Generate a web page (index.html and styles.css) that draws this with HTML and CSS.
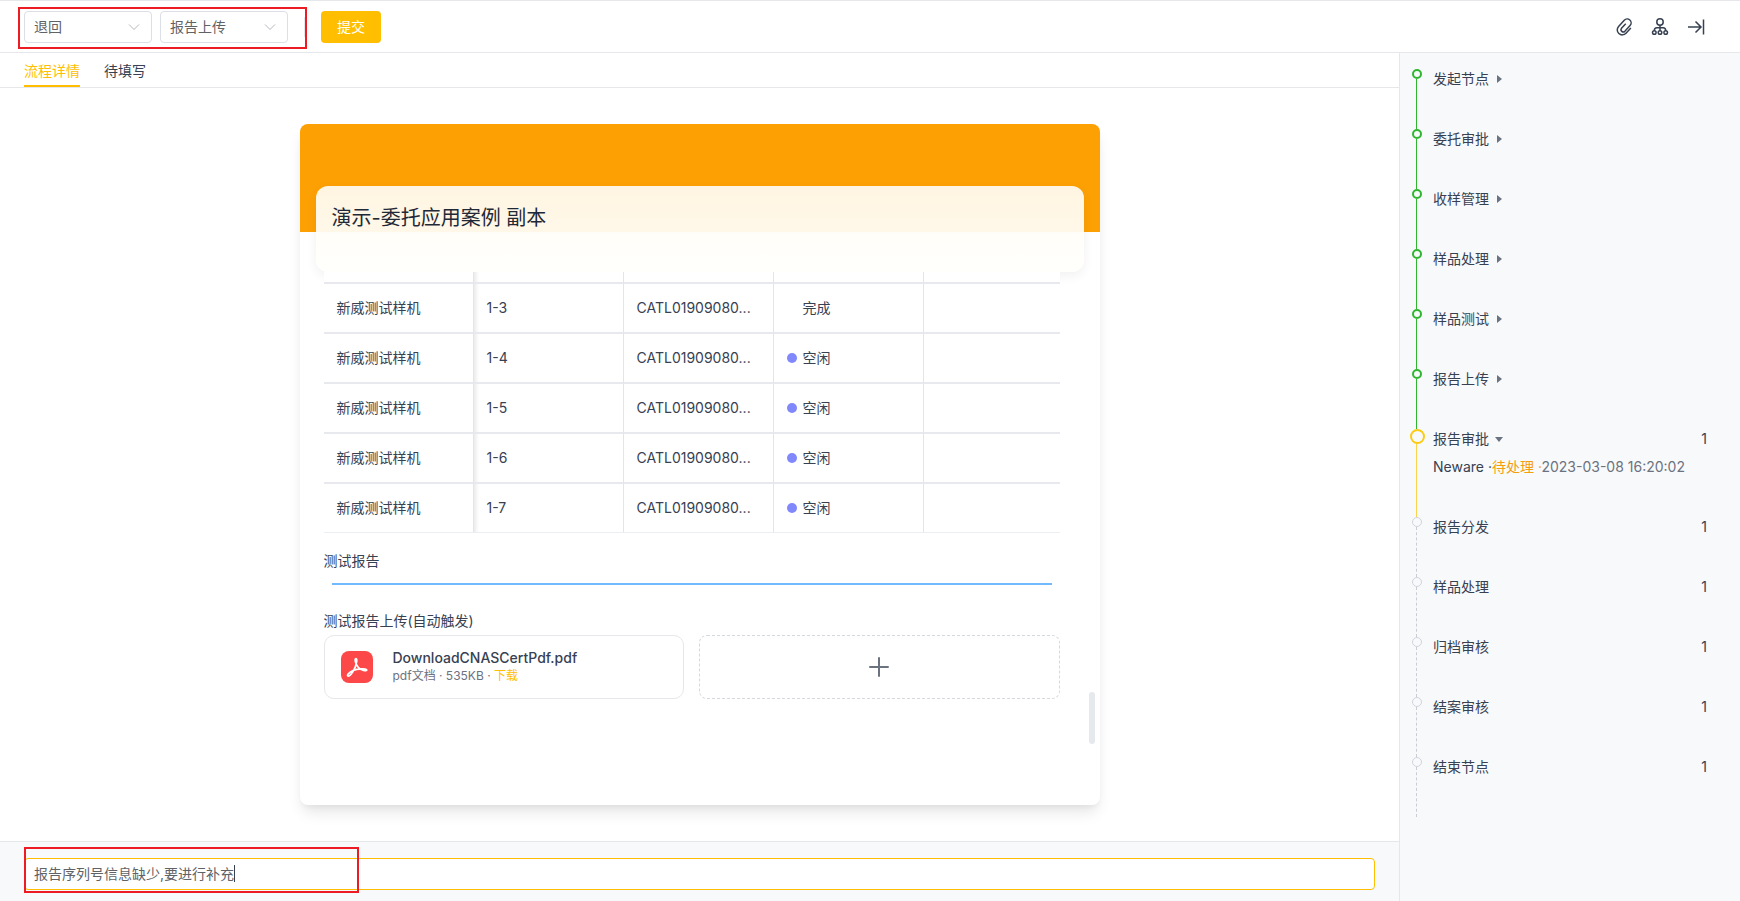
FILE: index.html
```html
<!DOCTYPE html>
<html lang="zh-CN">
<head>
<meta charset="utf-8">
<title>演示-委托应用案例 副本</title>
<link rel="stylesheet" href="styles.css">
</head>
<body>
<header class="topbar">
  <div class="field"><select class="select" aria-label="操作"><option>退回</option></select><svg class="chevron" viewBox="0 0 12 12" aria-hidden="true"><path d="M1 3.5l5 5 5-5"/></svg></div>
  <div class="field"><select class="select" aria-label="节点"><option>报告上传</option></select><svg class="chevron" viewBox="0 0 12 12" aria-hidden="true"><path d="M1 3.5l5 5 5-5"/></svg></div>
  <span class="divider"></span>
  <button class="submit" type="button">提交</button>
  <div class="mark mark-top"></div>
  <div class="tools">
    <button class="tool" type="button" aria-label="附件"><svg viewBox="0 0 24 24"><path stroke-width="1.8" d="M20.200 13.200l-5.800 6.300a6 6 0 0 1-8.900-8.200l6.800-7.400a4.700 4.700 0 0 1 7 6.400l-6.300 6.900a2.700 2.700 0 0 1-4-3.600l5.100-5.600"/></svg></button>
    <button class="tool" type="button" aria-label="流程图"><svg viewBox="0 0 20 20"><circle cx="10" cy="5" r="3.2"/><circle cx="4.300" cy="15.500" r="1.800"/><circle cx="10" cy="15.500" r="1.800"/><circle cx="15.700" cy="15.500" r="1.800"/><path d="M10 8.200v5.500M4.300 13.700c0-2.200 1-2.900 2.500-2.900h6.400c1.500 0 2.500.7 2.500 2.900"/></svg></button>
    <button class="tool" type="button" aria-label="收起"><svg viewBox="0 0 20 20"><path d="M2 10h13M9.500 4.500L15 10l-5.500 5.500M17.500 2.500v15"/></svg></button>
  </div>
</header>
<div class="workspace">
  <main class="main">
    <nav class="tabs">
      <button class="tab active" type="button">流程详情</button>
      <button class="tab" type="button">待填写</button>
    </nav>
    <div class="stage">
      <article class="card">
        <div class="banner"></div>
        <div class="title"><h1>演示-委托应用案例 副本</h1></div>
        <div class="content">
          <table class="samples">
            <tbody>
              <tr class="clipped"><td></td><td></td><td></td><td></td><td></td></tr>
              <tr><td>新威测试样机</td><td>1-3</td><td>CATL01909080...</td><td><span class="dot none"></span>完成</td><td></td></tr>
              <tr><td>新威测试样机</td><td>1-4</td><td>CATL01909080...</td><td><span class="dot"></span>空闲</td><td></td></tr>
              <tr><td>新威测试样机</td><td>1-5</td><td>CATL01909080...</td><td><span class="dot"></span>空闲</td><td></td></tr>
              <tr><td>新威测试样机</td><td>1-6</td><td>CATL01909080...</td><td><span class="dot"></span>空闲</td><td></td></tr>
              <tr><td>新威测试样机</td><td>1-7</td><td>CATL01909080...</td><td><span class="dot"></span>空闲</td><td></td></tr>
            </tbody>
          </table>
          <h2 class="label">测试报告</h2>
          <hr class="rule">
          <h2 class="label">测试报告上传(自动触发)</h2>
          <div class="files">
            <div class="file">
              <svg class="pdf" viewBox="0 0 32 32" aria-hidden="true"><rect width="32" height="32" rx="8"/><path d="M15 7.500c-1.800 0-.6 5.500 2.200 8.800 2.600 3.100 8.600 4.300 8.600 2.700 0-1.900-9.500-1.300-13.700.500-4 2-6.300 4.400-5.300 5.300 1.600 1.500 5.200-3.700 7.200-8.200 1.600-3.700 2.500-9.100 1-9.100z"/></svg>
              <div>
                <div class="file-name">DownloadCNASCertPdf.pdf</div>
                <div class="file-meta">pdf文档 · 535KB · <a href="#">下载</a></div>
              </div>
            </div>
            <button class="add" type="button" aria-label="添加文件"><svg viewBox="0 0 20 20"><path d="M10 1v18M1 10h18"/></svg></button>
          </div>
        </div>
        <div class="thumb"></div>
      </article>
    </div>
    <footer class="footer">
      <input class="comment" type="text" aria-label="意见" value="报告序列号信息缺少,要进行补充">
      <div class="cursor"></div>
      <div class="mark mark-bottom"></div>
    </footer>
  </main>
  <aside class="side">
    <ol class="steps">
      <li class="step done"><div class="row">发起节点<i class="caret"></i></div></li>
      <li class="step done"><div class="row">委托审批<i class="caret"></i></div></li>
      <li class="step done"><div class="row">收样管理<i class="caret"></i></div></li>
      <li class="step done"><div class="row">样品处理<i class="caret"></i></div></li>
      <li class="step done"><div class="row">样品测试<i class="caret"></i></div></li>
      <li class="step done"><div class="row">报告上传<i class="caret"></i></div></li>
      <li class="step current"><div class="row">报告审批<i class="caret down"></i><span class="count">1</span></div>
        <p class="detail">Neware ·<span class="pending">待处理 ·</span><time>2023-03-08 16:20:02</time></p></li>
      <li class="step"><div class="row">报告分发<span class="count">1</span></div></li>
      <li class="step"><div class="row">样品处理<span class="count">1</span></div></li>
      <li class="step"><div class="row">归档审核<span class="count">1</span></div></li>
      <li class="step"><div class="row">结案审核<span class="count">1</span></div></li>
      <li class="step"><div class="row">结束节点<span class="count">1</span></div></li>
    </ol>
  </aside>
</div>
</body>
</html>
```
FILE: styles.css
```css
*, *::before, *::after { box-sizing: border-box; }
body {
  margin: 0;
  min-height: 100vh;
  display: flex;
  flex-direction: column;
  font: 14px/20px Inter, "Noto Sans CJK SC", sans-serif;
  color: #374151;
  background: #fff;
}
button, input, select { font: inherit; color: inherit; }
button { padding: 0; border: 0; background: none; }
h1, h2, p, ol { margin: 0; padding: 0; font-weight: 400; }

.topbar {
  position: relative;
  display: flex;
  align-items: center;
  padding: 10px 34px 9px 24px;
  border-top: 1px solid #e5e7eb;
  border-bottom: 1px solid #e5e7eb;
}
.field { position: relative; width: 128px; margin-right: 8px; }
.select {
  display: block;
  width: 100%;
  height: 32px;
  padding: 0 9px;
  appearance: none;
  color: #606266;
  background: #fff;
  border: 1px solid #dcdfe6;
  border-radius: 4px;
}
.chevron {
  position: absolute;
  right: 12px;
  top: 10px;
  width: 12px;
  height: 12px;
  fill: none;
  stroke: #b4b8bf;
  pointer-events: none;
}
.divider { width: 1px; height: 20px; margin: 0 16px 0 8px; background: #e5e7eb; }
.submit { width: 60px; height: 32px; color: #fff; background: #ffbf00; border-radius: 4px; }
.tools { display: flex; gap: 16px; margin-left: auto; }
.tool { width: 20px; height: 20px; }
.tool svg { display: block; width: 20px; height: 20px; fill: none; stroke: #374151; stroke-width: 1.5; }
.mark { position: absolute; border: 2px solid #ed1c24; pointer-events: none; }
.mark-top { left: 18px; top: 6px; width: 289px; height: 42px; }
.mark-bottom { left: 24px; top: 5px; width: 335px; height: 46px; }

.workspace { flex: 1; display: flex; }
.main { flex: 1; display: flex; flex-direction: column; }
.tabs { display: flex; gap: 24px; height: 35px; padding: 0 24px; border-bottom: 1px solid #e5e7eb; }
.tab { height: 34px; padding-top: 4px; border-bottom: 2px solid transparent; }
.tab.active { color: #ffbf00; border-color: #ffbf00; }
.stage { flex: 1; display: flex; justify-content: center; padding: 36px 24px; }
.card {
  position: relative;
  width: 800px;
  background: #fff;
  border-radius: 8px;
  box-shadow: 0 10px 15px -3px rgba(0, 0, 0, .1), 0 4px 6px -2px rgba(0, 0, 0, .05);
}
.banner { height: 108px; background: #fda004; border-radius: 8px 8px 0 0; }
.title {
  position: relative;
  height: 86px;
  margin: -46px 16px 0;
  padding: 18px 16px;
  background: linear-gradient(rgba(255, 252, 244, .92), rgba(255, 255, 252, .95));
  border-radius: 12px;
  box-shadow: 0 4px 12px rgba(0, 0, 0, .06);
}
.title h1 { font-size: 20px; line-height: 28px; color: #1f2937; }
.content { position: relative; padding: 0 40px 0 24px; }

.samples { width: 100%; border-collapse: separate; border-spacing: 0; table-layout: fixed; background: #fff; }
.samples td { width: 150px; height: 50px; padding: 0 13px; white-space: nowrap; border-right: 1px solid #e4e5eb; border-bottom: 2px solid #e8e9ef; }
.samples td:nth-child(2) { background: linear-gradient(to right, #ececee, #fff 5px); }
.samples td:last-child { width: 136px; border-right: 0; }
.samples tr:last-child td { height: 49px; border-bottom: 1px solid #ebeef5; }
.samples .clipped td { height: 12px; }
.dot { display: inline-block; width: 10px; height: 10px; margin-right: 6px; border-radius: 50%; background: #8088fb; }
.dot.none { background: none; }

.label { font-size: 14px; line-height: 20px; margin-top: 18px; }
.rule { height: 2px; margin: 12px 8px 26px; border: 0; background: #73b9ff; }
.rule + .label { margin-top: 0; }
.files { display: grid; grid-template-columns: 1fr 1fr; gap: 15px; margin-top: 4px; }
.file { display: flex; align-items: center; gap: 20px; height: 64px; padding: 0 16px; border: 1px solid #e5e7eb; border-radius: 10px; }
.pdf { width: 32px; height: 32px; fill: #fc4848; }
.pdf path { fill: none; stroke: #fff; stroke-width: 1.7; }
.file-name { line-height: 18px; font-weight: 500; }
.file-meta { font-size: 12px; line-height: 18px; color: #6b7280; }
.file-meta a { color: #ffbf00; text-decoration: none; }
.add { display: grid; place-items: center; height: 64px; border: 1px dashed #d5d8dd; border-radius: 8px; }
.add svg { width: 20px; height: 20px; stroke: #6b7280; stroke-width: 2; stroke-linecap: round; }
.thumb { position: absolute; right: 5px; bottom: 61px; width: 6px; height: 52px; background: #e5e9ed; border-radius: 3px; }

.footer { position: relative; padding: 16px 24px 11px; background: #f8f9fb; border-top: 1px solid #e5e7eb; }
.comment { display: block; width: 100%; height: 32px; padding: 0 9px 2px; color: #606266; background: #fff; border: 1px solid #ffbf00; border-radius: 4px; outline: none; }
.cursor { position: absolute; left: 234px; top: 23px; width: 1px; height: 17px; background: #374151; }

.side { width: 341px; padding: 16px 33px 0 11px; background: #f8f9fb; border-left: 1px solid #e5e7eb; }
.steps { list-style: none; }
.step { position: relative; min-height: 60px; padding-left: 22px; }
.step::before { content: ""; position: absolute; left: 5px; top: 10px; bottom: 0; border-left: 1px dashed #c9cdd3; }
.step::after { content: ""; position: absolute; left: 1px; top: 0; width: 10px; height: 10px; border: 1px solid #d1d5db; border-radius: 50%; background: #f8f9fb; }
.step.done::before { border-left: 1px solid #2fb62f; }
.step.done::after { border: 2px solid #2fb62f; }
.step.current { padding-bottom: 40px; }
.step.current::before { border-left: 1px solid #fcd34d; }
.step.current::after { left: -1px; width: 15px; height: 15px; border: 2px solid #facc15; }
.row { display: flex; align-items: center; height: 20px; }
.caret { margin-left: 8px; border: solid transparent; border-width: 4px 0 4px 5px; border-left-color: #6b7280; }
.caret.down { margin-left: 6px; border-width: 5px 4px 0; border-color: #6b7280 transparent transparent; }
.count { margin-left: auto; }
.detail { margin-top: 8px; white-space: nowrap; }
.pending { color: #f59e0b; }
.detail time { color: #6b7280; }
```
